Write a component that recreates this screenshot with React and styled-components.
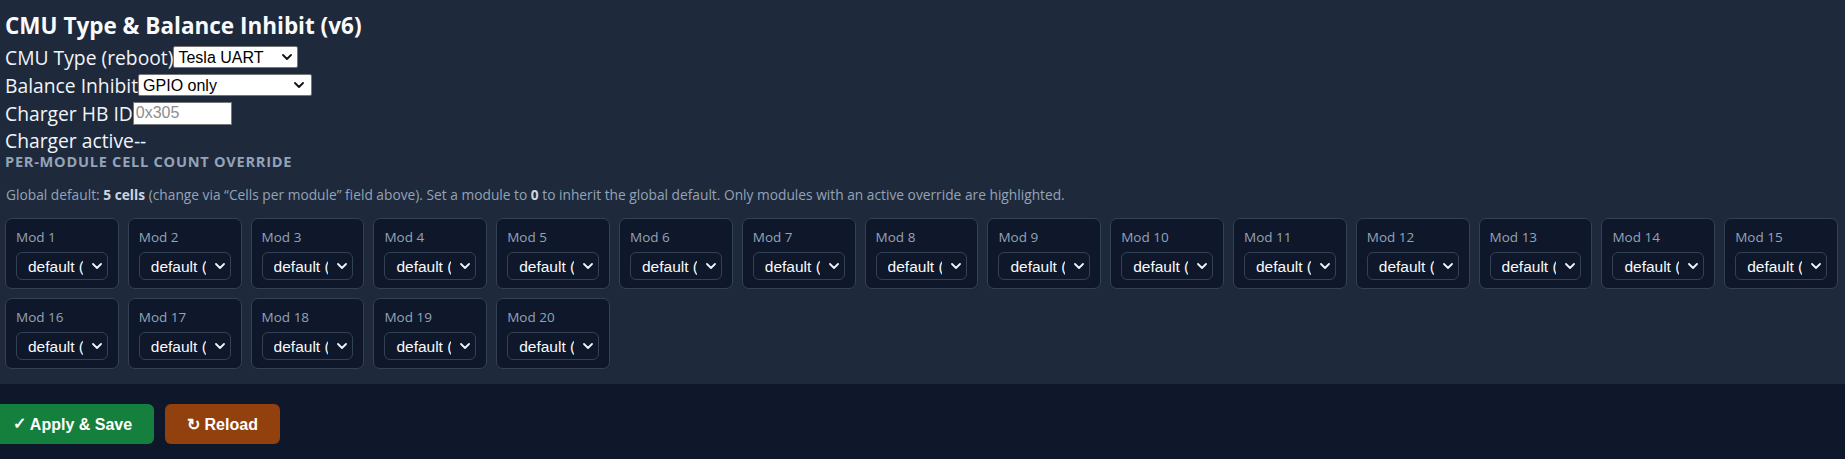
import React from 'react';
import styled, { createGlobalStyle } from 'styled-components';

const uiFont = '"Open Sans", "Noto Sans", sans-serif';
const formFont = '"Liberation Sans", Arial, sans-serif';
const pageBg = '#1e293b';
const darkBg = '#0f172a';
const lineColor = '#334155';
const muted = '#94a3b8';

const GlobalStyle = createGlobalStyle`
  html, body {
    margin: 0;
    padding: 0;
    background: ${darkBg};
  }
  body {
    font-family: ${uiFont};
    color: #f1f5f9;
  }
`;

const Page = styled.div`
  display: flex;
  flex-direction: column;
  min-height: 100vh;
`;

const Panel = styled.section`
  background: ${pageBg};
  padding: 8px 7px 15px 5px;
`;

const Heading = styled.h3`
  margin: 0;
  height: 35px;
  font-size: 22.5px;
  font-weight: 700;
  line-height: 35px;
  color: #f8fafc;
`;

const Row = styled.div`
  display: flex;
  align-items: center;
  height: ${p => (p.$status ? 26 : 28)}px;
  font-size: 19.3px;
  color: #f1f5f9;
`;

const SelectWrap = styled.span`
  position: relative;
  display: ${p => (p.$block ? 'flex' : 'inline-flex')};
`;

const NativeSelect = styled.select`
  appearance: none;
  box-sizing: border-box;
  width: ${p => p.$w}px;
  height: 22px;
  padding: 0 24px 0 4px;
  border: 1px solid #767676;
  border-radius: 2px;
  background: #fff;
  color: #000;
  font: 16px ${formFont};
`;

const TextInput = styled.input`
  box-sizing: border-box;
  width: 99px;
  height: 23px;
  padding: 1px 2px;
  border: 1px solid #767676;
  border-radius: 0;
  background: #fff;
  font: 16px ${formFont};
  &::placeholder {
    color: #8d8d8d;
  }
`;

const Arrow = styled.svg`
  position: absolute;
  right: ${p => p.$right}px;
  top: 50%;
  margin-top: -3px;
  pointer-events: none;
`;

const Chevron = ({ color, right }) => (
  <Arrow $right={right} width="10" height="6" viewBox="0 0 10 6">
    <path d="M1 1l4 4 4-4" fill="none" stroke={color} strokeWidth="1.8" strokeLinecap="round" strokeLinejoin="round" />
  </Arrow>
);

const SectionTitle = styled.div`
  font-size: 14.6px;
  font-weight: 700;
  line-height: 16px;
  letter-spacing: 0.05em;
  text-transform: uppercase;
  color: ${muted};
`;

const Hint = styled.p`
  margin: 16px 0 14px 1px;
  font-size: 13.75px;
  color: ${muted};
  b {
    color: #cbd5e1;
  }
`;

const ModGrid = styled.div`
  display: grid;
  grid-template-columns: repeat(auto-fill, minmax(110px, 1fr));
  gap: 9px;
`;

const ModCard = styled.div`
  padding: 9px 10px 8px;
  border: 1px solid ${lineColor};
  border-radius: 7px;
  background: ${darkBg};
`;

const ModLabel = styled.div`
  margin-bottom: 6px;
  font-size: 13.5px;
  color: ${muted};
`;

const ModSelect = styled.select`
  appearance: none;
  box-sizing: border-box;
  width: 100%;
  height: 28px;
  padding: 0 24px 0 11px;
  border: 1px solid ${lineColor};
  border-radius: 6px;
  background: ${darkBg};
  color: #f8fafc;
  font: 15.5px ${formFont};
`;

const ActionBar = styled.div`
  flex: 1;
  padding-top: 20px;
  margin-left: -9px;
  background: ${darkBg};
`;

const Bar = styled.div`
  display: flex;
  align-items: stretch;
  gap: 11px;
`;

const Button = styled.button`
  padding: 9px 22px;
  border: 0;
  border-radius: 6px;
  background: ${p => p.$bg};
  color: #fff;
  font: 700 16px ${formFont};
`;

const Glyph = styled.span`
  line-height: 22px;
  vertical-align: 1px;
`;

const mods = Array.from({ length: 20 }, (_, i) => i + 1);

export default function App() {
  return (
    <Page>
      <GlobalStyle />
      <Panel>
        <Heading>CMU Type &amp; Balance Inhibit (v6)</Heading>
        <Row>
          CMU Type (reboot)
          <SelectWrap>
            <NativeSelect $w={125} defaultValue="uart">
              <option value="uart">Tesla UART</option>
              <option value="can">CAN</option>
            </NativeSelect>
            <Chevron color="#111" right={6} />
          </SelectWrap>
        </Row>
        <Row>
          Balance Inhibit
          <SelectWrap>
            <NativeSelect $w={174} defaultValue="gpio">
              <option value="gpio">GPIO only</option>
              <option value="can">CAN charger heartbeat</option>
            </NativeSelect>
            <Chevron color="#111" right={8} />
          </SelectWrap>
        </Row>
        <Row>
          Charger HB ID
          <TextInput placeholder="0x305" />
        </Row>
        <Row $status>Charger active--</Row>
        <SectionTitle>Per-module cell count override</SectionTitle>
        <Hint>
          Global default: <b>5 cells</b> (change via “Cells per module” field above). Set a module to <b>0</b> to
          inherit the global default. Only modules with an active override are highlighted.
        </Hint>
        <ModGrid>
          {mods.map(n => (
            <ModCard key={n}>
              <ModLabel>Mod {n}</ModLabel>
              <SelectWrap $block>
                <ModSelect defaultValue="0">
                  <option value="0">default (5)</option>
                  <option value="4">4</option>
                  <option value="5">5</option>
                  <option value="6">6</option>
                </ModSelect>
                <Chevron color="#f1f5f9" right={6} />
              </SelectWrap>
            </ModCard>
          ))}
        </ModGrid>
      </Panel>
      <ActionBar>
        <Bar>
          <Button $bg="#15803d"><Glyph>✓</Glyph> Apply &amp; Save</Button>
          <Button $bg="#92400e">↻ Reload</Button>
        </Bar>
      </ActionBar>
    </Page>
  );
}
